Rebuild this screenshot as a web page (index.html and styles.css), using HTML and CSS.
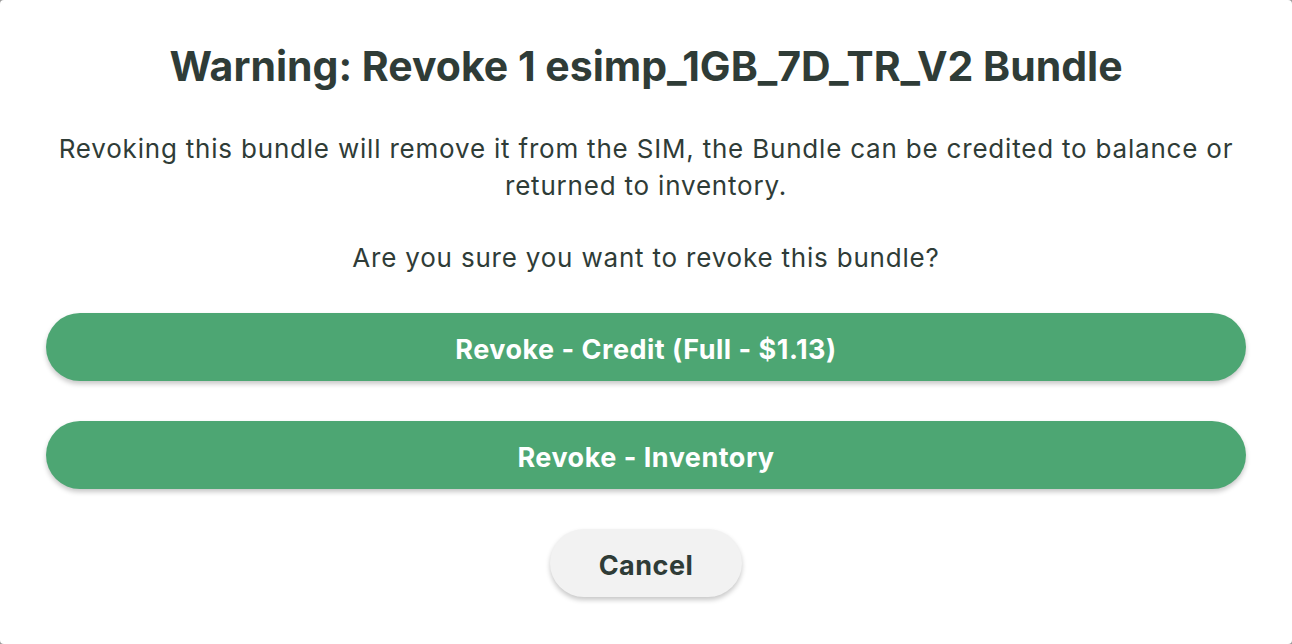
FILE: index.html
```html
<!DOCTYPE html>
<html lang="en">
<head>
<meta charset="utf-8">
<title>Revoke Bundle</title>
<link rel="stylesheet" href="styles.css">
</head>
<body>
<div class="dialog">
  <h1 class="title">Warning: Revoke 1 esimp_1GB_7D_TR_V2 Bundle</h1>
  <p class="text">Revoking this bundle will remove it from the SIM, the Bundle can be credited to balance or returned to inventory.</p>
  <p class="text question">Are you sure you want to revoke this bundle?</p>
  <div class="actions">
    <button class="btn btn-primary">Revoke - Credit (Full - $1.13)</button>
    <button class="btn btn-primary">Revoke - Inventory</button>
    <button class="btn btn-cancel">Cancel</button>
  </div>
</div>
</body>
</html>
```
FILE: styles.css
```css
html, body {
  margin: 0;
  padding: 0;
  background: #9a9a9a;
}
.dialog {
  box-sizing: border-box;
  width: 1292px;
  height: 644px;
  background: #ffffff;
  border-radius: 4px;
  padding: 42px 46px 0;
  font-family: Inter, "Noto Sans", sans-serif;
  color: #2f3c37;
  text-align: center;
}
.title {
  margin: 0;
  font-size: 41px;
  font-weight: 700;
  line-height: 48px;
  letter-spacing: 0;
}
.text {
  margin: 40px 0 0;
  font-size: 26px;
  font-weight: 400;
  line-height: 37px;
  letter-spacing: 0.8px;
}
.text.question {
  margin-top: 35px;
}
.actions {
  margin-top: 37px;
  display: flex;
  flex-direction: column;
  align-items: center;
  gap: 40px;
}
.btn {
  box-sizing: border-box;
  height: 68px;
  padding: 4px 0 0;
  border: none;
  border-radius: 34px;
  font-family: Inter, "Noto Sans", sans-serif;
  font-size: 27px;
  font-weight: 700;
  letter-spacing: 0.5px;
  cursor: pointer;
  box-shadow: 0 3px 5px rgba(0, 0, 0, 0.22);
}
.btn-primary {
  width: 100%;
  background: #4da673;
  color: #ffffff;
}
.btn-cancel {
  width: 192px;
  background: #f2f2f2;
  color: #2f3c37;
}
```
